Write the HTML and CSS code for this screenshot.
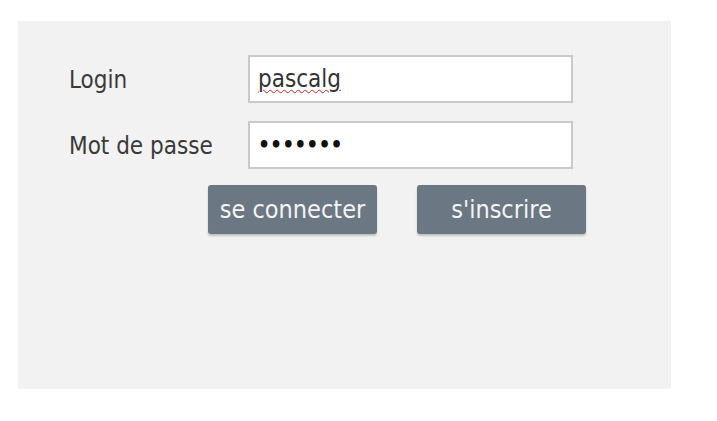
FILE: index.html
```html
<!DOCTYPE html>
<html lang="fr">
<head>
<meta charset="utf-8">
<title>Connexion</title>
<link rel="stylesheet" href="styles.css">
</head>
<body>
<div class="panel">
  <div class="form">
    <label class="label">Login</label>
    <div class="field"><span class="misspelled">pascalg</span></div>
    <label class="label">Mot de passe</label>
    <div class="field"><span class="dots">•••••••</span></div>
  </div>
  <div class="actions">
    <button class="btn">se connecter</button>
    <button class="btn">s'inscrire</button>
  </div>
</div>
</body>
</html>
```
FILE: styles.css
```css
html, body {
  margin: 0;
  padding: 0;
  background: #ffffff;
}
.panel {
  margin: 21px 0 0 18px;
  width: 653px;
  height: 368px;
  background: #f2f2f2;
  box-sizing: border-box;
  padding: 34px 0 0 51px;
}
.form {
  display: grid;
  grid-template-columns: 179px 325px;
  row-gap: 18px;
  align-items: center;
}
.label {
  font-family: "DejaVu Sans Condensed", "DejaVu Sans", sans-serif;
  font-size: 24px;
  color: #3a3a3a;
  padding-top: 2px;
}
.field {
  height: 48px;
  box-sizing: border-box;
  border: 2px solid #c9c9c9;
  background: #ffffff;
  display: flex;
  align-items: center;
  padding-left: 8px;
  font-family: "DejaVu Sans Condensed", "DejaVu Sans", sans-serif;
  font-size: 24px;
  color: #333;
}
.misspelled {
  text-decoration: underline wavy #d42020;
  text-decoration-thickness: 1px;
  text-underline-offset: 2px;
}
.dots {
  font-size: 21px;
  letter-spacing: 0;
  color: #111;
  font-weight: bold;
}
.actions {
  display: flex;
  gap: 40px;
  margin: 16px 0 0 139px;
}
.btn {
  width: 169px;
  height: 49px;
  border: none;
  border-radius: 3px;
  background: #6b7782;
  color: #f4f4f4;
  font-family: "DejaVu Sans Condensed", "DejaVu Sans", sans-serif;
  font-size: 25px;
  padding: 0;
  box-shadow: 0 2px 2px rgba(0,0,0,0.2);
}
```
